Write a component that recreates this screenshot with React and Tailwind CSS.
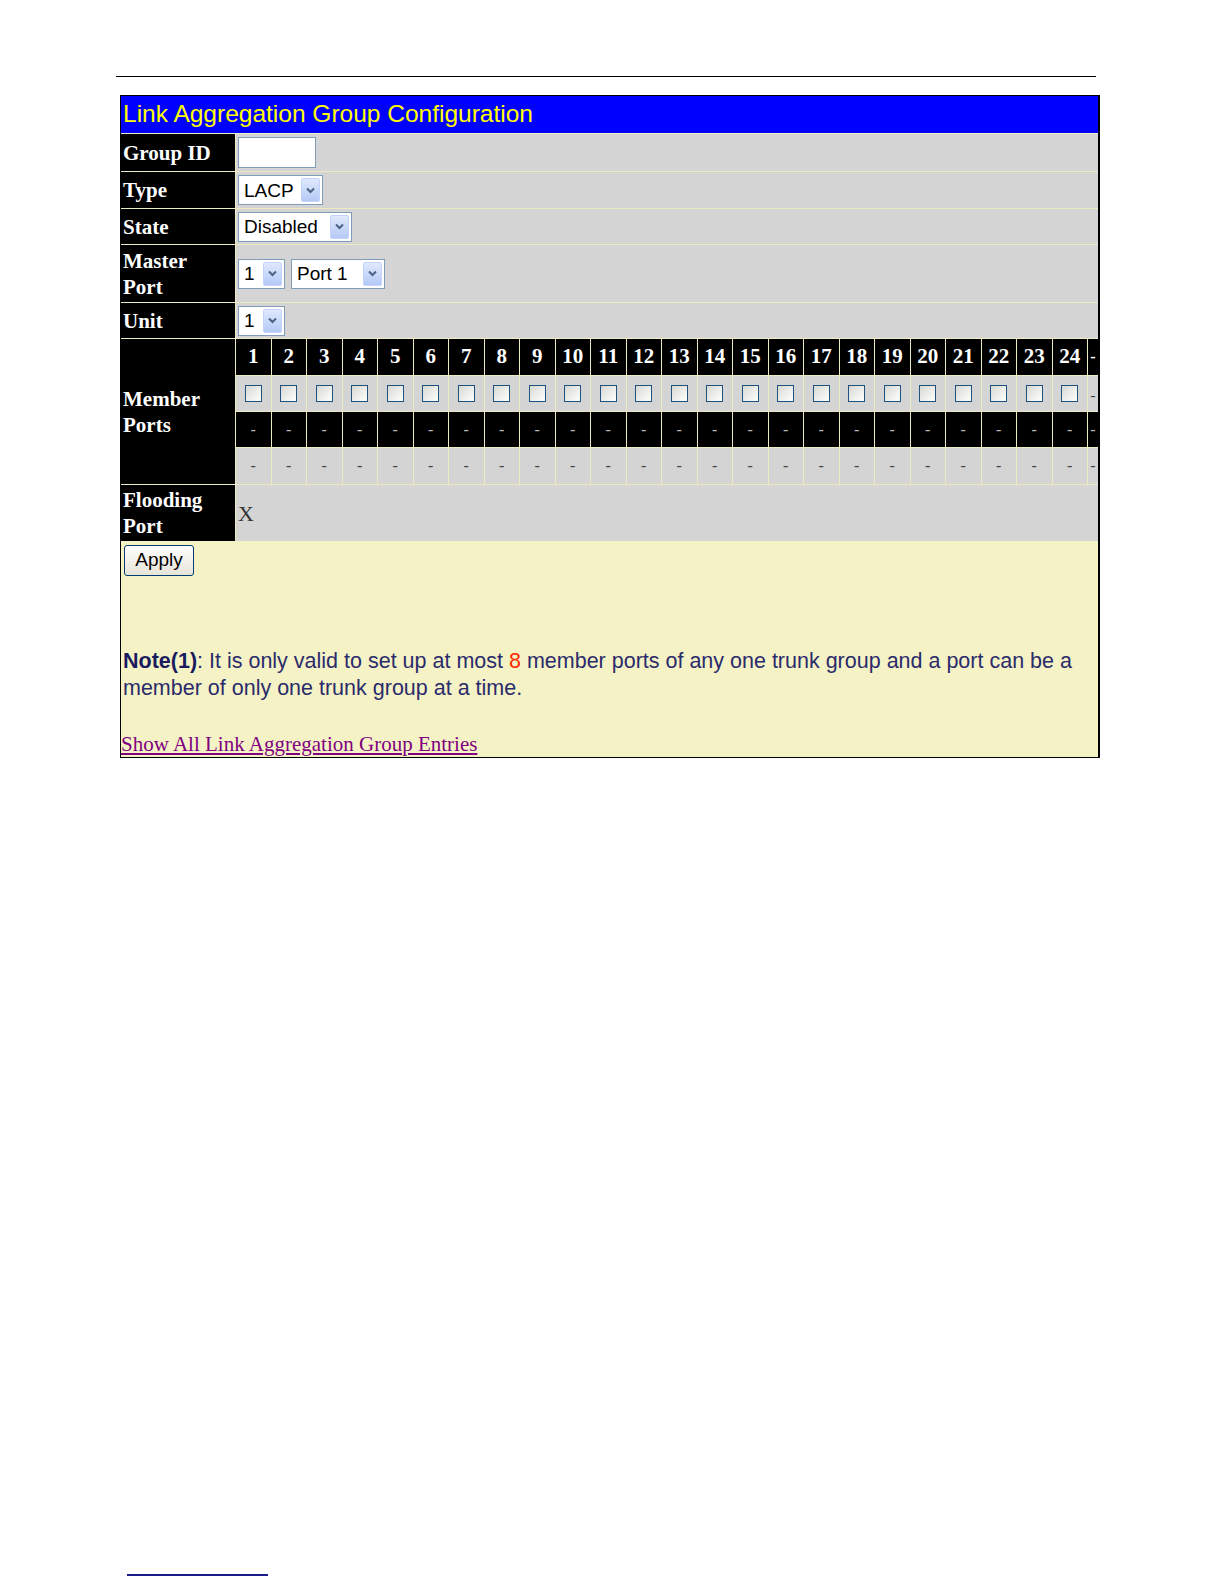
import React from "react";

const ports = Array.from({ length: 24 }, (_, i) => i + 1);

function Chevron() {
  return (
    <svg width="9" height="7" viewBox="0 0 9 7">
      <path d="M1 1.5 L4.5 5 L8 1.5" fill="none" stroke="#4d6185" strokeWidth="2" />
    </svg>
  );
}

function Select({ text, width }) {
  return (
    <div
      className={`inline-flex h-[30px] items-center border border-[#7f9db9] bg-white ${width}`}
    >
      <span className="flex-1 pl-[5px] text-[19px] leading-none text-black">{text}</span>
      <span className="mr-[2px] flex h-[24px] w-[19px] items-center justify-center rounded-[2px] border border-[#c3d3fd] bg-gradient-to-b from-[#e0e9fd] to-[#b4c9f5]">
        <Chevron />
      </span>
    </div>
  );
}

function Label({ children }) {
  return (
    <div className="flex items-center bg-black pl-[2px] font-['Liberation_Serif',serif] text-[21px] font-bold leading-[26px] text-white">
      {children}
    </div>
  );
}

function Value({ children, className = "" }) {
  return (
    <div className={`flex items-center gap-[6px] bg-[#d4d4d4] px-[2px] ${className}`}>{children}</div>
  );
}

function Checkbox() {
  return (
    <span className="block h-[17px] w-[17px] border border-[#1c5180] bg-gradient-to-br from-[#d8d8d2] to-white" />
  );
}

export default function App() {
  return (
    <div className="relative h-[1584px] w-[1224px] bg-white font-['Liberation_Sans',Arial,sans-serif]">
      <div className="pt-[76px]">
        <div className="ml-[116px] h-px w-[980px] bg-black" />
      </div>

      <div className="ml-[120px] mt-[18px] w-[980px] border border-r-2 border-black">
        <div className="flex h-[37px] items-center bg-[#0000ff] pl-[2px] text-[24.5px] text-[#ffff00]">
          Link Aggregation Group Configuration
        </div>

        <div className="grid grid-cols-[114px_1fr] gap-px bg-[#ecebc4] pt-px">
          <Label>Group ID</Label>
          <Value className="h-[37px]">
            <span className="block h-[31px] w-[78px] border border-[#7f9db9] bg-white" />
          </Value>

          <Label>Type</Label>
          <Value className="h-[36px]">
            <Select text="LACP" width="w-[85px]" />
          </Value>

          <Label>State</Label>
          <Value className="h-[35px]">
            <Select text="Disabled" width="w-[114px]" />
          </Value>

          <Label>
            Master
            <br />
            Port
          </Label>
          <Value className="h-[57px]">
            <Select text="1" width="w-[47px]" />
            <Select text="Port 1" width="w-[94px]" />
          </Value>

          <Label>Unit</Label>
          <Value className="h-[35px]">
            <Select text="1" width="w-[47px]" />
          </Value>

          <Label>
            Member
            <br />
            Ports
          </Label>
          <div className="grid grid-cols-[repeat(24,minmax(0,1fr))_10px] grid-rows-[36px_35px_35px_36px] gap-px">
            {ports.map((p) => (
              <div
                key={"h" + p}
                className="flex items-center justify-center bg-black font-['Liberation_Serif',serif] text-[21px] font-bold text-white"
              >
                {p}
              </div>
            ))}
            <div className="flex items-center justify-center bg-black font-['Liberation_Serif',serif] text-[16px] font-bold text-white">
              -
            </div>

            {ports.map((p) => (
              <div key={"c" + p} className="flex items-center justify-center bg-[#d4d4d4]">
                <Checkbox />
              </div>
            ))}
            <div className="flex items-center justify-center bg-[#d4d4d4] pt-[4px] font-['Liberation_Serif',serif] text-[15px] text-[#333]">
              -
            </div>

            {ports.map((p) => (
              <div
                key={"b" + p}
                className="flex items-center justify-center bg-black font-['Liberation_Serif',serif] text-[16px] text-[#bbbbbb]"
              >
                -
              </div>
            ))}
            <div className="flex items-center justify-center bg-black font-['Liberation_Serif',serif] text-[16px] text-[#bbbbbb]">
              -
            </div>

            {ports.map((p) => (
              <div
                key={"g" + p}
                className="flex items-center justify-center bg-[#d4d4d4] font-['Liberation_Serif',serif] text-[16px] text-[#444]"
              >
                -
              </div>
            ))}
            <div className="flex items-center justify-center bg-[#d4d4d4] font-['Liberation_Serif',serif] text-[16px] text-[#444]">
              -
            </div>
          </div>

          <Label>
            Flooding
            <br />
            Port
          </Label>
          <Value className="h-[56px] font-['Liberation_Serif',serif] text-[22px] text-[#333]">X</Value>
        </div>

        <div className="h-[216px] bg-[#f5f3c6] pt-[4px]">
          <button className="ml-[3px] h-[31px] w-[70px] rounded-[3px] border border-[#003c74] bg-gradient-to-b from-white to-[#e6e4d8] text-[19px] text-black">
            Apply
          </button>
          <p className="mt-[72px] pl-[2px] text-[21.5px] leading-[27px] text-[#2b2b6c]">
            <span className="font-bold text-[#1a1a5e]">Note(1)</span>: It is only valid to set up at most{" "}
            <span className="text-[#ff2a00]">8</span> member ports of any one trunk group and a port can be a member
            of only one trunk group at a time.
          </p>
          <a
            href="#"
            className="mt-[30px] block font-['Liberation_Serif',serif] text-[21px] leading-[24px] text-[#800080] underline"
          >
            Show All Link Aggregation Group Entries
          </a>
        </div>
      </div>

      <div className="absolute left-[127px] top-[1574px] h-[2px] w-[141px] bg-[#1c1c8c]" />
    </div>
  );
}
